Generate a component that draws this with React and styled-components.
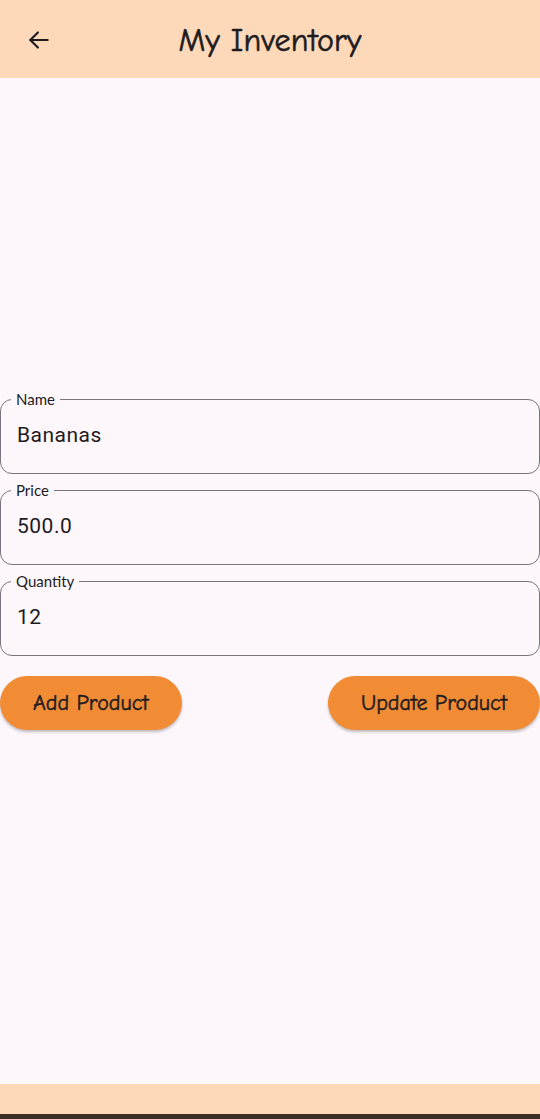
import styled, { createGlobalStyle } from "styled-components"

const GlobalStyle = createGlobalStyle`
  html, body {
    margin: 0;
    padding: 0;
    background: #fdf7fc;
    font-family: "Open Sans", "DejaVu Sans", sans-serif;
  }
  * { box-sizing: border-box; }
`

const FIELDS = [
  { label: "Name", value: "Bananas" },
  { label: "Price", value: "500.0" },
  { label: "Quantity", value: "12" },
]

export default function App() {
  return (
    <Page>
      <GlobalStyle />
      <TopBar>
        <BackButton aria-label="Back">
          <svg width="26" height="26" viewBox="0 0 24 24" fill="none" stroke="#1d1b20" strokeWidth="2" strokeLinecap="round" strokeLinejoin="round">
            <path d="M20 12H4" />
            <path d="M11 5l-7 7 7 7" />
          </svg>
        </BackButton>
        <Title>My Inventory</Title>
      </TopBar>

      <Content>
        <Form>
          {FIELDS.map((field) => (
            <Field key={field.label}>
              <Legend>{field.label}</Legend>
              <Input type="text" defaultValue={field.value} />
            </Field>
          ))}
          <Actions>
            <ActionButton type="button">Add Product</ActionButton>
            <ActionButton type="button">Update Product</ActionButton>
          </Actions>
        </Form>
      </Content>

      <BottomBar />
      <NavStrip />
    </Page>
  )
}

const Page = styled.div`
  height: 1119px;
  display: flex;
  flex-direction: column;
  background: #fdf7fc;
`

const TopBar = styled.header`
  height: 78px;
  flex-shrink: 0;
  background: #fed9b9;
  display: flex;
  align-items: center;
  padding: 0 0 0 24px;
`

const BackButton = styled.button`
  background: none;
  border: none;
  padding: 0;
  width: 30px;
  height: 30px;
  display: flex;
  align-items: center;
  justify-content: center;
  margin-top: 2px;
`

const Title = styled.h1`
  flex: 1;
  margin: 2px 0 0 0;
  padding-right: 54px;
  text-align: center;
  font-family: "Comic Neue", "Lato", "Open Sans", sans-serif;
  font-weight: 400;
  font-size: 32px;
  color: #1d1b20;
  letter-spacing: 0.2px;
  -webkit-text-stroke: 0.6px #1d1b20;
`

const Content = styled.main`
  flex: 1;
  display: flex;
  flex-direction: column;
  padding-top: 312px;
`

const Form = styled.form`
  display: flex;
  flex-direction: column;
  gap: 7px;
`

const Field = styled.fieldset`
  margin: 0;
  height: 84px;
  border: 1px solid #79747e;
  border-radius: 12px;
  padding: 13px 16px 0;
  min-width: 0;
`

const Legend = styled.legend`
  margin-left: -6px;
  padding: 0 5px;
  font-family: "Lato", "Open Sans", sans-serif;
  font-size: 15px;
  color: #1d1b20;
  line-height: 18px;
`

const Input = styled.input`
  display: block;
  width: 100%;
  height: 28px;
  border: none;
  background: transparent;
  outline: none;
  font-family: "Roboto", "Open Sans", sans-serif;
  font-size: 21px;
  color: #1d1b20;
  padding: 0;
  margin: 0;
  letter-spacing: 0.5px;
`

const Actions = styled.div`
  display: flex;
  justify-content: space-between;
  margin-top: 13px;
`

const ActionButton = styled.button`
  height: 54px;
  padding: 0 33px;
  border: none;
  border-radius: 27px;
  background: #f18c35;
  color: #1d1b20;
  font-family: "Comic Neue", "Lato", "Open Sans", sans-serif;
  font-weight: 400;
  font-size: 22px;
  -webkit-text-stroke: 0.5px #1d1b20;
  box-shadow: 0 2px 3px rgba(0, 0, 0, 0.25);
`

const BottomBar = styled.div`
  height: 30px;
  flex-shrink: 0;
  background: #fed9b9;
`

const NavStrip = styled.div`
  height: 5px;
  flex-shrink: 0;
  background: #3a2e25;
`
